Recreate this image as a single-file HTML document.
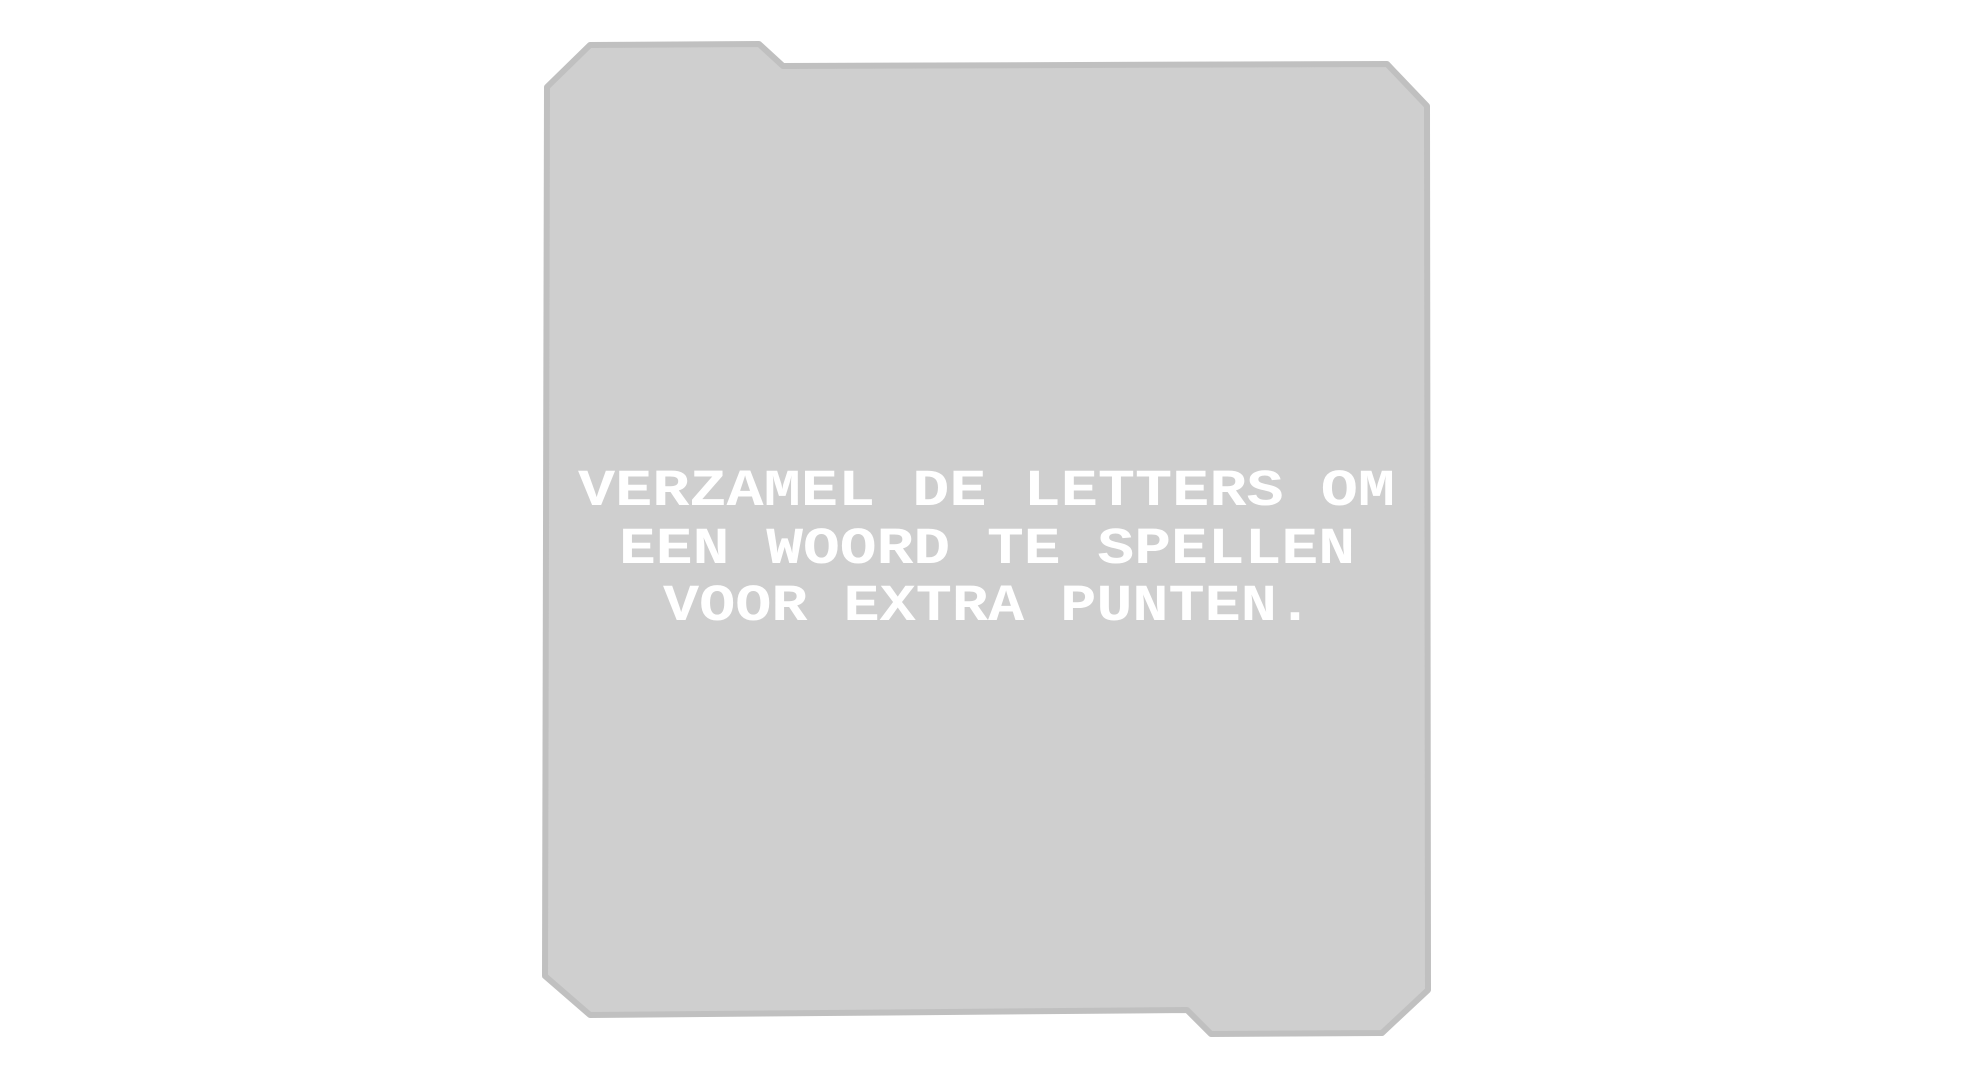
<!DOCTYPE html>
<html><head><meta charset="utf-8"><style>
html,body{margin:0;padding:0;background:#fff;width:1980px;height:1080px;overflow:hidden}
svg{position:absolute;left:0;top:0}
</style></head><body>
<svg width="1980" height="1080"><polygon points="590,45 759,44 783,66 1387,64 1427,106 1428,990 1382,1033 1211,1034 1187,1010 590,1015 545,976 547,87" fill="#cfcfcf" stroke="#c0c0c0" stroke-width="6" stroke-linejoin="round"/>
<g fill="#fff" font-family="Liberation Mono, monospace" font-weight="bold" font-size="52">
<text x="578" y="505" textLength="817" lengthAdjust="spacingAndGlyphs">VERZAMEL DE LETTERS OM</text>
<text x="619" y="563" textLength="736" lengthAdjust="spacingAndGlyphs">EEN WOORD TE SPELLEN</text>
<text x="663" y="620" textLength="650" lengthAdjust="spacingAndGlyphs">VOOR EXTRA PUNTEN.</text>
</g></svg>
</body></html>
